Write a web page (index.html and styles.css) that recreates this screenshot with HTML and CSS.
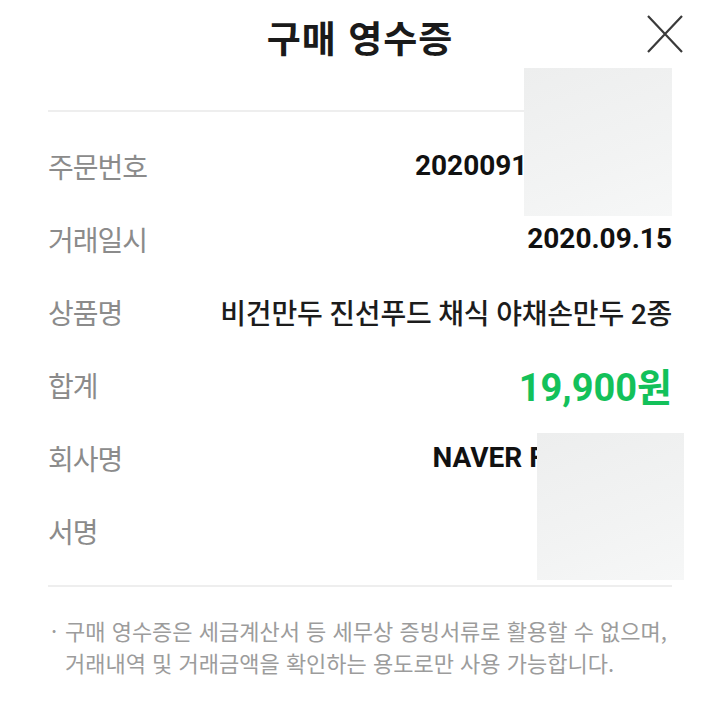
FILE: index.html
```html
<!DOCTYPE html>
<html lang="ko">
<head>
<meta charset="utf-8">
<title>구매 영수증</title>
<link rel="stylesheet" href="styles.css">
</head>
<body>
<div class="page">
  <header class="header">
    <span class="spacer"></span>
    <h1 class="title">구매 영수증</h1>
    <button class="close" aria-label="닫기">
      <svg width="36" height="38" viewBox="0 0 36 38"><path d="M1 1 L35 37 M35 1 L1 37" stroke="#3a3a3a" stroke-width="2.2" fill="none"/></svg>
    </button>
  </header>
  <section class="content">
    <div class="divider top"></div>
    <dl class="rows">
      <div class="row"><dt class="label">주문번호</dt><dd class="value num">2020091512345678</dd></div>
      <div class="row"><dt class="label">거래일시</dt><dd class="value num">2020.09.15</dd></div>
      <div class="row"><dt class="label">상품명</dt><dd class="value">비건만두 진선푸드 채식 야채손만두 2종</dd></div>
      <div class="row"><dt class="label">합계</dt><dd class="value total">19,900원</dd></div>
      <div class="row"><dt class="label">회사명</dt><dd class="value num">NAVER FINANCIAL</dd></div>
      <div class="row"><dt class="label">서명</dt><dd class="value"></dd></div>
    </dl>
    <div class="divider"></div>
    <p class="note"><span class="bullet">·</span><span class="note-text">구매 영수증은 세금계산서 등 세무상 증빙서류로 활용할 수 없으며,<br>거래내역 및 거래금액을 확인하는 용도로만 사용 가능합니다.</span></p>
  </section>
  <div class="mask mask-1"></div>
  <div class="mask mask-2"></div>
</div>
</body>
</html>
```
FILE: styles.css
```css
* { box-sizing: border-box; }
html, body { margin: 0; padding: 0; background: #fff; }
body {
  font-family: "Noto Sans CJK KR", "Noto Sans", sans-serif;
  color: #111;
}
.page {
  position: relative;
  width: 720px;
  height: 724px;
  overflow: hidden;
}
.header {
  display: grid;
  grid-template-columns: 1fr auto 1fr;
  align-items: center;
  height: 74px;
  padding: 0 37px;
}
.title {
  margin: 0;
  font-size: 37px;
  font-weight: 700;
  line-height: 1;
  color: #1a1a1a;
  letter-spacing: 1px;
}
.close {
  justify-self: end;
  align-self: center;
  border: 0;
  background: none;
  padding: 0;
  width: 36px;
  height: 38px;
  margin-top: -6px;
  display: block;
}
.close svg { display: block; }
.content {
  padding: 36px 48px 0;
}
.divider {
  height: 2px;
  background: #eeeeee;
}
.rows {
  margin: 0;
  padding: 17px 0 18px;
}
.row {
  display: flex;
  align-items: center;
  justify-content: space-between;
  height: 73px;
}
.label {
  margin: 0;
  font-size: 28px;
  letter-spacing: -1px;
  color: #8b8b8b;
  font-weight: 400;
  white-space: nowrap;
}
.value {
  margin: 0;
  font-family: Roboto, "Noto Sans CJK KR", sans-serif;
  font-size: 28px;
  letter-spacing: -0.2px;
  font-weight: 500;
  color: #1c1c1c;
  white-space: nowrap;
}
.value.num {
  font-size: 28px;
  font-weight: 700;
  letter-spacing: 0;
  color: #111;
}
.value.total {
  font-size: 38px;
  font-weight: 700;
  letter-spacing: 0;
  color: #13c15a;
}
.note {
  display: flex;
  margin: 0;
  padding: 27px 0 0 3px;
  font-size: 22px;
  line-height: 32px;
  letter-spacing: 0;
  color: #9c9c9c;
}
.bullet {
  width: 14px;
  flex: none;
}
.note-text { flex: 1; white-space: nowrap; }
.mask {
  position: absolute;
  background: linear-gradient(160deg, #edeeee 0%, #f2f3f3 60%, #f6f7f7 100%);
}
.mask-1 { left: 524px; top: 68px; width: 148px; height: 148px; }
.mask-2 { left: 537px; top: 433px; width: 147px; height: 147px; }
```
